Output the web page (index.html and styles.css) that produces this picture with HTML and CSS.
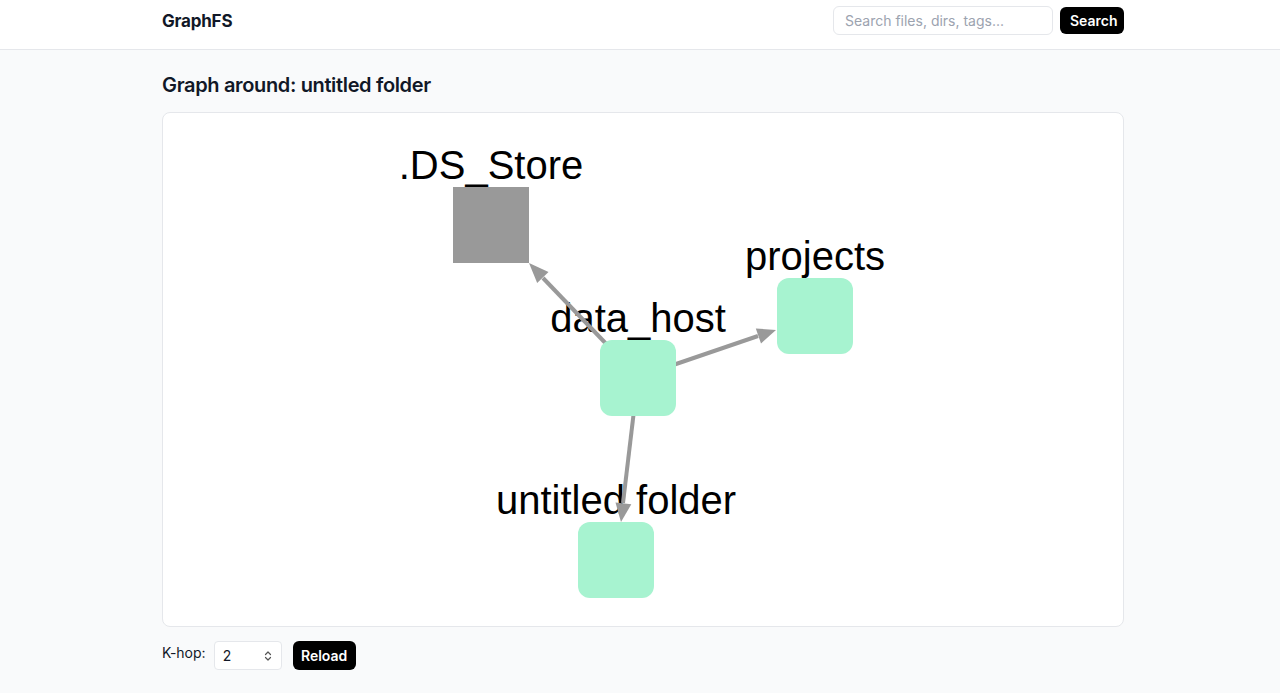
FILE: index.html
```html
<!DOCTYPE html>
<html>
<head>
<meta charset="utf-8">
<title>GraphFS</title>
<link rel="stylesheet" href="styles.css">
</head>
<body>
<header class="topbar">
  <div class="wrap topbar-inner">
    <div class="brand">GraphFS</div>
    <form class="search">
      <input class="search-input" type="text" placeholder="Search files, dirs, tags...">
      <button class="btn btn-search" type="button">Search</button>
    </form>
  </div>
</header>
<main class="wrap">
  <h1 class="title">Graph around: untitled folder</h1>
  <div class="card">
    <svg class="graph" viewBox="163 113 960 513" width="960" height="513">
      <g class="labels">
        <text x="491" y="179">.DS_Store</text>
        <text x="638" y="332">data_host</text>
        <text x="815" y="270">projects</text>
        <text x="616" y="514">untitled folder</text>
      </g>
      <g class="edges">
        <line x1="638" y1="377" x2="543" y2="278"/>
        <polygon points="529,263 537.2,283.0 548.5,272.1"/>
        <line x1="638" y1="377" x2="758" y2="336"/>
        <polygon points="776,330 755.8,328.4 761.0,343.5"/>
        <line x1="638" y1="377" x2="623" y2="503"/>
        <polygon points="621,522 615.5,502.4 631.3,504.3"/>
      </g>
      <g class="nodes">
        <rect class="file" x="453" y="187" width="76" height="76"/>
        <rect class="dir" x="600" y="340" width="76" height="76" rx="12"/>
        <rect class="dir" x="777" y="278" width="76" height="76" rx="12"/>
        <rect class="dir" x="578" y="522" width="76" height="76" rx="12"/>
      </g>
    </svg>
  </div>
  <div class="controls">
    <label class="khop-label" for="khop">K-hop:</label>
    <span class="khop-wrap">
      <input id="khop" class="khop" type="number" value="2" min="1">
      <svg class="spinner" viewBox="0 0 8 12" width="8" height="12">
        <path d="M1.5 4.5 L4 2 L6.5 4.5 M1.5 7.5 L4 10 L6.5 7.5" fill="none" stroke="#555" stroke-width="1.2" stroke-linecap="round" stroke-linejoin="round"/>
      </svg>
    </span>
    <button class="btn btn-reload" type="button">Reload</button>
  </div>
</main>
</body>
</html>
```

FILE: styles.css
```css
* { box-sizing: border-box; }
html, body { margin: 0; padding: 0; }
body {
  background: #f9fafb;
  font-family: Inter, "Noto Sans", "Liberation Sans", sans-serif;
  color: #111827;
}
.wrap {
  width: 962px;
  margin-left: calc(50% - 478px);
}
.topbar {
  background: #fff;
  border-bottom: 1px solid #e5e7eb;
  height: 50px;
}
.topbar-inner {
  display: flex;
  align-items: center;
  justify-content: space-between;
  height: 41px;
}
.brand {
  font-size: 17px;
  font-weight: 700;
  color: #111827;
  letter-spacing: -0.2px;
}
.search {
  display: flex;
  align-items: center;
  gap: 7px;
  margin: 0;
}
.search-input {
  width: 220px;
  height: 29px;
  border: 1px solid #e5e7eb;
  border-radius: 6px;
  padding: 0 11px;
  font-family: inherit;
  font-size: 14px;
  color: #111827;
  background: #fff;
  outline: none;
}
.search-input::placeholder { color: #9ca3af; }
.btn {
  background: #000;
  color: #fff;
  border: none;
  border-radius: 6px;
  font-family: inherit;
  font-size: 14px;
  font-weight: 600;
  cursor: pointer;
}
.btn-search {
  height: 27px;
  padding: 0 10px;
  width: 64px;
}
.title {
  font-size: 20px;
  font-weight: 600;
  margin: 21px 0 13px 0;
  line-height: 28px;
  letter-spacing: -0.35px;
}
.card {
  background: #fff;
  border: 1px solid #e5e7eb;
  border-radius: 8px;
  height: 515px;
  overflow: hidden;
}
.graph { display: block; }
.labels text {
  font-family: "Liberation Sans", Arial, sans-serif;
  font-size: 40px;
  fill: #000;
  text-anchor: middle;
}
.edges line {
  stroke: #999;
  stroke-width: 4;
}
.edges polygon { fill: #999; }
.nodes .file { fill: #999; }
.nodes .dir { fill: #a7f3d0; }
.controls {
  display: flex;
  align-items: center;
  margin-top: 14px;
}
.khop-label {
  font-size: 14px;
  color: #111827;
  margin-right: 8px;
  position: relative;
  top: -3px;
}
.khop-wrap {
  position: relative;
  display: inline-block;
  margin-right: 11px;
}
.khop {
  display: block;
  width: 68px;
  height: 29px;
  border: 1px solid #e5e7eb;
  border-radius: 4px;
  padding: 0 6px 0 8px;
  font-family: inherit;
  font-size: 14px;
  color: #111827;
  background: #fff;
  -moz-appearance: textfield;
}
.khop::-webkit-inner-spin-button,
.khop::-webkit-outer-spin-button {
  -webkit-appearance: none;
  margin: 0;
}
.spinner {
  position: absolute;
  right: 10px;
  top: 9px;
}
.btn-reload {
  height: 29px;
  width: 63px;
  padding: 0;
}
```
